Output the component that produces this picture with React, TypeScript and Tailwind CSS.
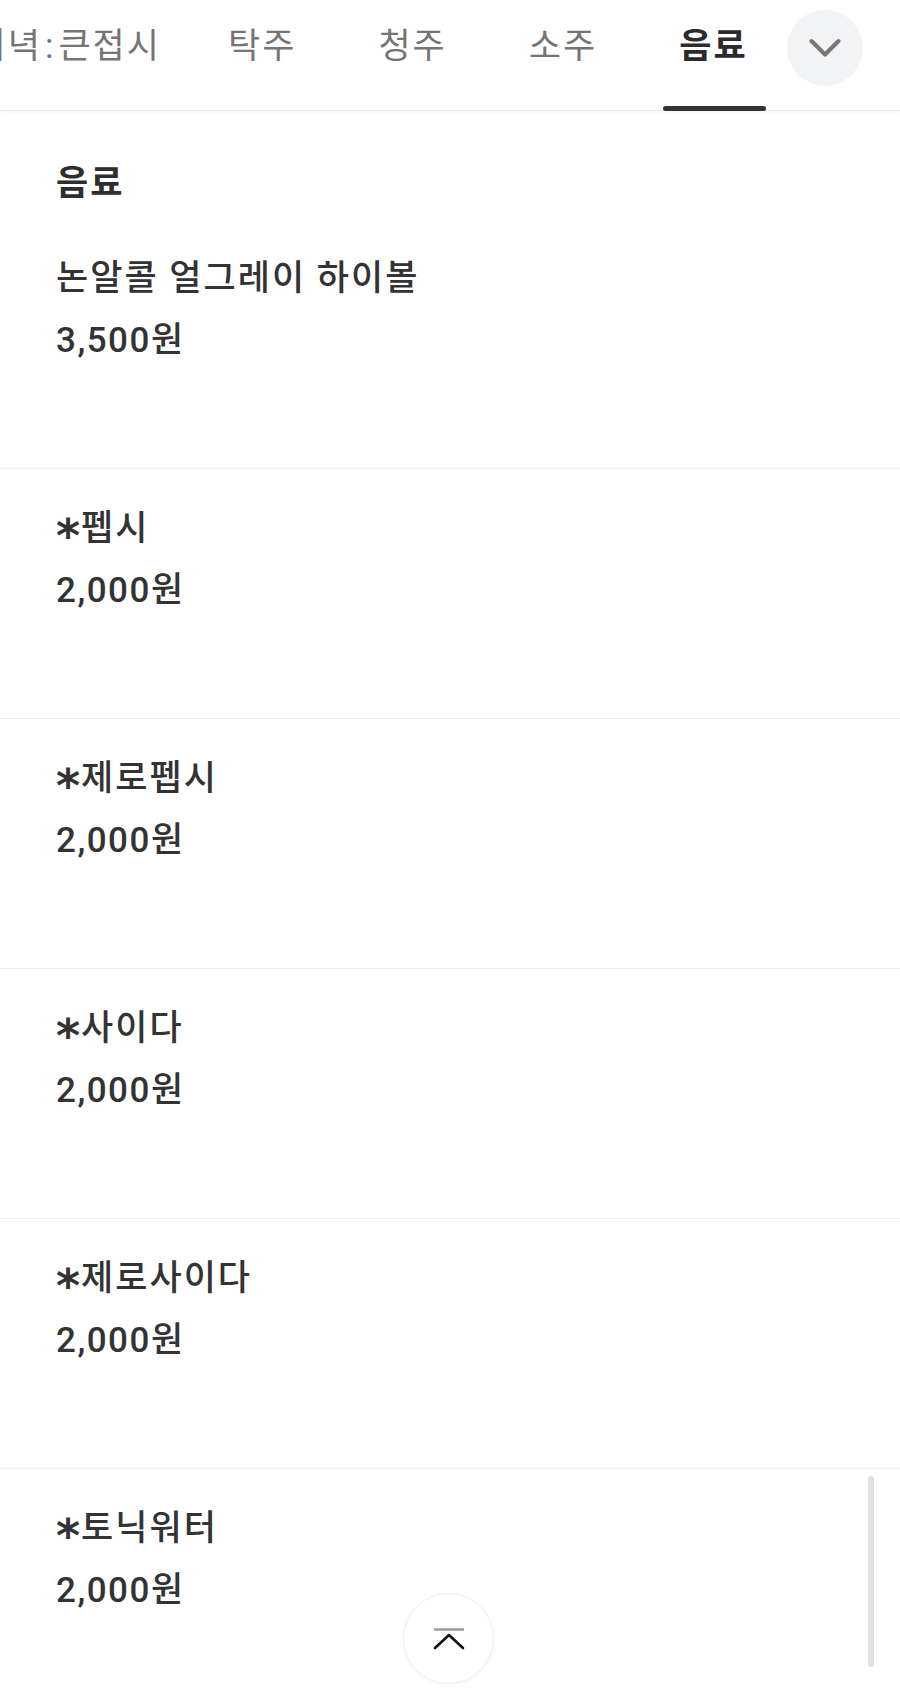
import React from "react";

const items = [
  { name: "논알콜 얼그레이 하이볼", price: "3,500원" },
  { name: "*펩시", price: "2,000원" },
  { name: "*제로펩시", price: "2,000원" },
  { name: "*사이다", price: "2,000원" },
  { name: "*제로사이다", price: "2,000원" },
  { name: "*토닉워터", price: "2,000원" },
];

const tabs = ["탁주", "청주", "소주", "음료"];

function Name({ text }: { text: string }) {
  if (text.startsWith("*")) {
    return (
      <>
        <span
          className="relative top-[12px] leading-[0px] text-[46px] font-bold mr-[1px] tracking-normal"
          style={{ fontFamily: '"DejaVu Sans", sans-serif' }}
        >
          *
        </span>
        {text.slice(1)}
      </>
    );
  }
  return <>{text}</>;
}

export default function App() {
  return (
    <div
      className="relative w-[900px] h-[1697px] overflow-hidden bg-white text-[#333333]"
      style={{ fontFamily: 'Roboto, "Noto Sans CJK KR", "Noto Sans", sans-serif' }}
    >
      <header className="relative h-[111px] border-b border-[#ebebeb] shadow-[0_2px_3px_rgba(0,0,0,0.03)] flex items-stretch">
        <div className="flex-none w-[161px] flex justify-end pt-[25px]">
          <span className="flex-none whitespace-nowrap text-[35px] leading-[44px] tracking-[2px] text-[#757575]">
            저녁<span className="mx-[3px]">:</span>큰접시
          </span>
        </div>
        <div className="flex items-stretch ml-[51px] gap-[48px]">
          {tabs.map((t) => {
            const active = t === "음료";
            return (
              <div key={t} className="relative pl-[16px] pr-[18px] pt-[25px]">
                <span
                  className={
                    active
                      ? "whitespace-nowrap text-[35px] leading-[44px] tracking-[2px] font-bold text-[#2b2b2b]"
                      : "whitespace-nowrap text-[35px] leading-[44px] tracking-[2px] text-[#757575]"
                  }
                >
                  {t}
                </span>
                {active && (
                  <div className="absolute left-0 right-0 bottom-[-1px] h-[5px] rounded-full bg-[#333333]" />
                )}
              </div>
            );
          })}
        </div>
        <button className="absolute right-[37px] top-[10px] w-[76px] h-[76px] rounded-full bg-[#f2f3f5] flex items-center justify-center">
          <svg width="32" height="20" viewBox="0 0 32 20" fill="none">
            <path
              d="M2.5 3 L16 16.5 L29.5 3"
              stroke="#777777"
              strokeWidth="4"
              strokeLinecap="round"
              strokeLinejoin="round"
            />
          </svg>
        </button>
      </header>

      <main className="pt-[51px]">
        <h2 className="px-[56px] text-[35px] leading-[44px] tracking-[2px] font-bold text-[#2e2e2e]">음료</h2>
        <ul className="mt-[13px]">
          {items.map((it) => (
            <li
              key={it.name}
              className="border-b border-[#efefef] px-[56px] pt-[38px] pb-[105px]"
            >
              <div className="h-[44px] text-[35px] leading-[44px] tracking-[2px] font-medium text-[#333333] whitespace-nowrap">
                <Name text={it.name} />
              </div>
              <div className="mt-[18px] text-[35px] leading-[44px] tracking-[1.5px] font-medium text-[#333333]">
                {it.price}
              </div>
            </li>
          ))}
        </ul>
      </main>

      <div className="absolute left-[868px] top-[1476px] w-[6px] h-[191px] rounded-full bg-[#e0e0e0]" />

      <button className="absolute left-[403px] top-[1593px] w-[91px] h-[91px] rounded-full bg-white border-[1.5px] border-[#efefef] shadow-[0_1px_4px_rgba(0,0,0,0.04)] flex items-center justify-center">
        <svg width="32" height="24" viewBox="0 0 32 24" fill="none" className="mt-[1px]">
          <path d="M1 2.5 H31" stroke="#9a9a9a" strokeWidth="2.5" />
          <path
            d="M2 21 L16 8 L30 21"
            stroke="#111111"
            strokeWidth="2.6"
            strokeLinecap="round"
            strokeLinejoin="round"
          />
        </svg>
      </button>
    </div>
  );
}
